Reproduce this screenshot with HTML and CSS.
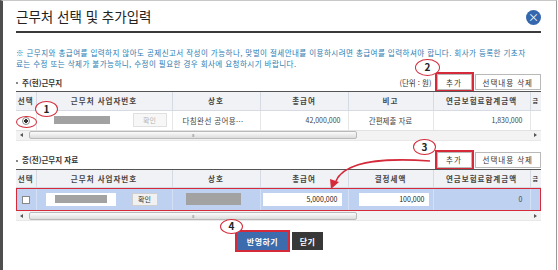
FILE: index.html
```html
<!DOCTYPE html>
<html lang="ko">
  <head>
    <meta charset="UTF-8" />
    <title>근무처 선택 및 추가입력</title>
    <link rel="stylesheet" href="styles.css">
  </head>
  <body>
    <div class="dialog">
      <div class="title-bar">
        <h1 class="title">근무처 선택 및 추가입력</h1>
        <button class="close">&times;</button>
      </div>

      <p class="notice">※ 근무지와 총급여를 입력하지 않아도 공제신고서 작성이 가능하나, 맞벌이 절세안내를 이용하시려면 총급여를 입력하셔야 합니다. 회사가 등록한 기초자<br>료는 수정 또는 삭제가 불가능하니, 수정이 필요한 경우 회사에 요청하시기 바랍니다.</p>

      <!-- current workplace -->
      <div class="section-head">
        <h2 class="section-title">주(현)근무지</h2>
        <div class="tools">
          <span class="unit">(단위 : 원)</span>
          <button class="btn marked">추가</button>
          <button class="btn">선택내용 삭제</button>
        </div>
      </div>
      <div class="grid-wrap">
        <table class="grid">
          <colgroup>
            <col style="width:20px"><col style="width:136px"><col style="width:88px"><col style="width:88px"><col style="width:85px"><col style="width:97px"><col style="width:11px">
          </colgroup>
          <thead>
            <tr><th>선택</th><th>근무처 사업자번호</th><th>상호</th><th>총급여</th><th>비고</th><th>연금보험료합계금액</th><th class="edge">금</th></tr>
          </thead>
          <tbody>
            <tr class="row">
              <td class="c"><span class="radio"></span></td>
              <td><div class="bizno"><span class="masked"></span><button class="chk chk-off">확인</button></div></td>
              <td class="name">다침완선 공어용···</td>
              <td class="num">42,000,000</td>
              <td class="c">간편제출 자료</td>
              <td class="num">1,830,000</td>
              <td></td>
            </tr>
          </tbody>
        </table>
      </div>
      <div class="hscroll">
        <span class="arr arr-l"></span>
        <span class="thumb">III</span>
        <span class="arr arr-r"></span>
      </div>

      <!-- previous workplace -->
      <div class="section-head second">
        <h2 class="section-title">종(전)근무지 자료</h2>
        <div class="tools">
          <button class="btn marked">추가</button>
          <button class="btn">선택내용 삭제</button>
        </div>
      </div>
      <div class="grid-wrap">
        <table class="grid">
          <colgroup>
            <col style="width:20px"><col style="width:136px"><col style="width:88px"><col style="width:88px"><col style="width:85px"><col style="width:97px"><col style="width:11px">
          </colgroup>
          <thead>
            <tr><th>선택</th><th>근무처 사업자번호</th><th>상호</th><th>총급여</th><th>결정세액</th><th>연금보험료합계금액</th><th class="edge">금</th></tr>
          </thead>
          <tbody>
            <tr class="row edit">
              <td class="c"><span class="check"></span></td>
              <td><div class="bizno edit-no"><span class="field"><span class="masked"></span></span><button class="chk">확인</button></div></td>
              <td><span class="masked wide"></span></td>
              <td><span class="field num-field f-pay">5,000,000</span></td>
              <td><span class="field num-field f-tax">100,000</span></td>
              <td class="num">0</td>
              <td></td>
            </tr>
          </tbody>
        </table>
        <div class="hl-row"></div>
      </div>
      <div class="hscroll">
        <span class="arr arr-l"></span>
        <span class="thumb">III</span>
        <span class="arr arr-r"></span>
      </div>

      <div class="actions">
        <button class="apply">반영하기</button>
        <button class="shut">닫기</button>
      </div>

      <!-- annotations -->
      <span class="ring"></span>
      <span class="mark m1">1</span>
      <span class="mark m2">2</span>
      <span class="mark m3">3</span>
      <span class="mark m4">4</span>
      <svg class="pointer" width="558" height="270" viewBox="0 0 558 270">
        <path d="M430 161 C 390 158, 345 160, 336 181" fill="none" stroke="#d42a3a" stroke-width="1.6" />
        <polygon points="331,189 330,179 339,182" fill="#d42a3a" />
      </svg>
    </div>
  </body>
</html>
```

FILE: styles.css
```css
* {
  margin: 0;
  padding: 0;
  box-sizing: border-box;
}

body {
  width: 558px;
  height: 270px;
  overflow: hidden;
  background: #fff;
  font-family: "Noto Sans CJK KR", "Noto Sans", sans-serif;
  color: #333;
}

button {
  font-family: inherit;
  cursor: pointer;
}

.dialog {
  position: relative;
  width: 557px;
  height: 270px;
  border-left: 3px solid #4e4e4e;
  border-top: 1px solid #c8c8c8;
  border-right: 1px solid #9a9a9a;
  padding: 0 15px 0 13px;
}

.title-bar {
  display: flex;
  align-items: center;
  justify-content: space-between;
  height: 32px;
  border-bottom: 2px solid #3a3a3a;
}

.title {
  font-size: 13.5px;
  font-weight: normal;
  color: #222;
  margin-top: -1px;
}

.close {
  width: 15px;
  height: 15px;
  border-radius: 50%;
  border: none;
  background: #3567ae;
  color: #fff;
  font-size: 11px;
  line-height: 15px;
  margin-top: 3px;
}

.notice {
  margin-top: 14px;
  font-size: 7.5px;
  line-height: 11px;
  letter-spacing: 0.45px;
  color: #2b7bb0;
  white-space: nowrap;
}

.section-head {
  display: flex;
  align-items: center;
  justify-content: space-between;
  height: 18px;
  margin-top: 4px;
}

.section-head.second {
  margin-top: 10px;
}

.section-title {
  font-size: 7.5px;
  font-weight: bold;
  color: #333;
  padding-left: 6px;
  position: relative;
}

.section-title::before {
  content: "";
  position: absolute;
  left: 0;
  top: 50%;
  width: 2px;
  height: 2px;
  background: #888;
}

.tools {
  display: flex;
  align-items: center;
  gap: 3px;
}

.unit {
  font-size: 7.5px;
  color: #333;
  margin-right: 2px;
}

.btn {
  height: 16px;
  padding: 0 7px;
  border: 1px solid #b9b9b9;
  background: #fff;
  font-size: 7.5px;
  letter-spacing: 1px;
  color: #333;
}

.btn.marked {
  width: 35px;
  outline: 2px solid #d42a3a;
  outline-offset: 0;
}

.grid-wrap {
  position: relative;
  width: 525px;
  overflow: hidden;
  border-top: 1px solid #555;
}

.grid {
  width: 525px;
  table-layout: fixed;
  border-collapse: collapse;
}

.grid th {
  height: 18px;
  background: #f0f2f6;
  border-right: 1px solid #d6dbe3;
  border-bottom: 1px solid #d6dbe3;
  font-size: 7.5px;
  font-weight: bold;
  letter-spacing: 1px;
  color: #444;
  white-space: nowrap;
  overflow: hidden;
}

.grid th.edge {
  text-align: left;
  padding-left: 2px;
  font-size: 6px;
  letter-spacing: 0;
  border-right: none;
}

.grid td {
  height: 20px;
  border-right: 1px solid #e6e6e6;
  border-bottom: 1px solid #e2e2e2;
  font-size: 7.5px;
  color: #444;
  white-space: nowrap;
  overflow: hidden;
}

.grid td.c {
  text-align: center;
}

.grid td.num {
  text-align: right;
  padding-right: 7px;
  font-size: 7px;
}

.grid td.name {
  padding-left: 10px;
  letter-spacing: 0.4px;
}

.radio {
  display: inline-block;
  width: 8px;
  height: 8px;
  border-radius: 50%;
  border: 1px solid #888;
  background: radial-gradient(circle, #333 0 1.6px, #fff 2px);
  vertical-align: middle;
}

.check {
  display: inline-block;
  width: 8px;
  height: 8px;
  border: 1px solid #888;
  background: #fff;
  vertical-align: middle;
}

.bizno {
  display: flex;
  align-items: center;
  padding-left: 17px;
  gap: 23px;
}

.masked {
  display: block;
  width: 56px;
  height: 8px;
  background: #a2a2a2;
}

.masked.wide {
  width: 55px;
  height: 12px;
  margin-left: 13px;
}

.chk {
  width: 26px;
  height: 13px;
  border: 1px solid #cfcfcf;
  background: #f1f1f1;
  font-size: 7px;
  color: #333;
}

.chk-off {
  width: 34px;
  height: 14px;
  color: #b5b5b5;
  border-color: #e0e0e0;
  background: #f7f7f7;
}

.row.edit td {
  height: 23px;
  background: #bed1f1;
  border-right-color: #d4e0f5;
}

.edit-no {
  padding-left: 9px;
  gap: 16px;
}

.field {
  display: flex;
  align-items: center;
  height: 13px;
  background: #fff;
  padding: 0 9px;
  width: 70px;
}

.num-field {
  justify-content: flex-end;
  padding: 0 4px;
  font-size: 7px;
  color: #222;
}

.f-pay {
  width: 79px;
  margin-left: 2px;
}

.f-tax {
  width: 70px;
  margin-left: 10px;
}

.hl-row {
  position: absolute;
  left: 0;
  right: 0;
  top: 18px;
  height: 23px;
  border: 1.5px solid #d42a3a;
}

.hscroll {
  display: flex;
  align-items: center;
  width: 525px;
  height: 10px;
  background: #f3f3f3;
  border-bottom: 1px solid #e8e8e8;
  padding: 0 4px;
}

.arr {
  width: 0;
  height: 0;
  border-top: 2px solid transparent;
  border-bottom: 2px solid transparent;
}

.arr-l {
  border-right: 3px solid #555;
}

.arr-r {
  border-left: 3px solid #555;
  margin-left: auto;
}

.thumb {
  display: flex;
  align-items: center;
  justify-content: center;
  width: 328px;
  height: 8px;
  margin-left: 6px;
  border: 1px solid #b9b9b9;
  border-radius: 2px;
  background: linear-gradient(#fbfbfb, #dcdcdc);
  font-size: 4px;
  color: #888;
  letter-spacing: -0.5px;
}

.actions {
  display: flex;
  justify-content: center;
  gap: 4px;
  margin-top: 11px;
  padding-left: 3px;
}

.apply,
.shut {
  height: 18px;
  border: none;
  color: #fff;
  font-size: 8px;
  font-weight: bold;
  letter-spacing: 0.5px;
}

.apply {
  width: 51px;
  background: #3c6cad;
  outline: 2px solid #d42a3a;
}

.shut {
  width: 31px;
  background: #383838;
}

/* red annotation marks */
.mark,
.ring {
  position: absolute;
  border: 1.5px solid #d42a3a;
  border-radius: 50%;
}

.mark {
  width: 23px;
  height: 16px;
  background: #fff;
  font-size: 10px;
  font-weight: bold;
  line-height: 13px;
  text-align: center;
  color: #222;
}

.m1 { left: 32px; top: 100px; }
.m2 { left: 412px; top: 58px; width: 25px; height: 17px; }
.m3 { left: 410px; top: 138px; }
.m4 { left: 217px; top: 218px; height: 15px; line-height: 12px; }

.ring {
  left: 13px;
  top: 115px;
  width: 21px;
  height: 12px;
}

.pointer {
  position: absolute;
  left: -3px;
  top: -1px;
  pointer-events: none;
}
```
